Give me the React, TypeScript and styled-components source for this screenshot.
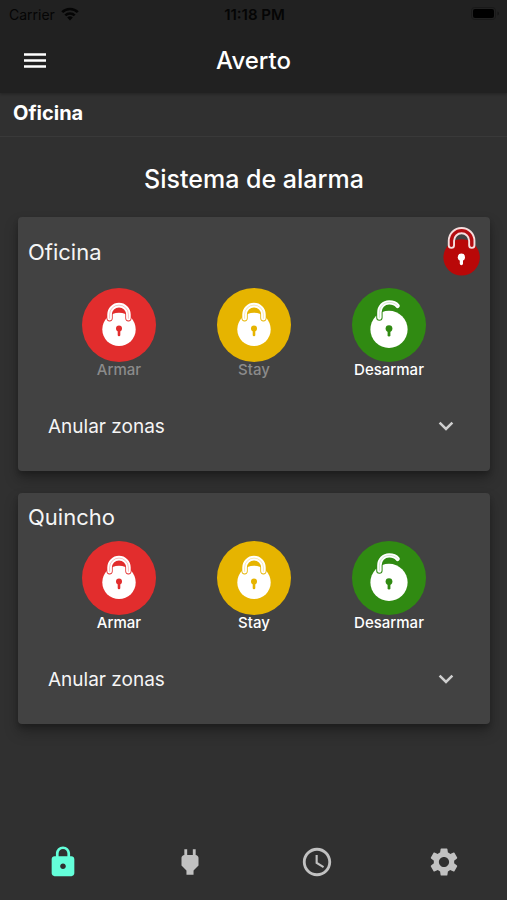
import React, { useState } from "react";
import styled, { createGlobalStyle } from "styled-components";
import { MdLock, MdPower, MdAccessTime, MdSettings } from "react-icons/md";

const GlobalStyle = createGlobalStyle`
  *, *::before, *::after { box-sizing: border-box; }
  body {
    margin: 0;
    background: #303030;
    color: #fff;
    font-family: Inter, Roboto, "Liberation Sans", sans-serif;
  }
  button { font: inherit; color: inherit; background: none; border: 0; padding: 0; cursor: pointer; }
  h1, h2, h3 { margin: 0; font-weight: 500; }
  svg { display: block; }
`;

const Page = styled.div`
  min-height: 100vh;
  display: flex;
  flex-direction: column;
`;

const Header = styled.header`
  background: #212121;
  box-shadow: 0 1px 3px rgba(0, 0, 0, 0.3);
`;

const StatusBar = styled.div`
  display: grid;
  grid-template-columns: 1fr auto 1fr;
  align-items: center;
  height: 28px;
  padding: 0 7px 0 9px;
  color: #050505;
  font-size: 14px;
`;

const Carrier = styled.span`
  display: flex;
  align-items: center;
  gap: 6px;
`;

const Clock = styled.span`
  font-size: 15px;
  font-weight: 600;
`;

const BatterySlot = styled.span`
  justify-self: end;
`;

const AppBar = styled.div`
  display: grid;
  grid-template-columns: 48px 1fr 48px;
  align-items: center;
  height: 65px;
  padding: 0 11px;
`;

const MenuButton = styled.button`
  display: grid;
  place-items: center;
  height: 48px;
`;

const Title = styled.h1`
  font-size: 24px;
  line-height: 32px;
  text-align: center;
`;

const Place = styled.h2`
  padding: 8px 13px 11px;
  border-bottom: 1px solid #393939;
  font-size: 20px;
  line-height: 24px;
  font-weight: 700;
`;

const Main = styled.main`
  flex: 1;
  display: flex;
  flex-direction: column;
  gap: 22px;
  padding: 26px 17px 24px 18px;
`;

const Heading = styled.h2`
  font-size: 25px;
  line-height: 32px;
  text-align: center;
`;

const Card = styled.section`
  padding: 0 10px 20px;
  border-radius: 4px;
  background: #424242;
  box-shadow: 0 8px 14px rgba(0, 0, 0, 0.28), 0 3px 5px rgba(0, 0, 0, 0.2);
`;

const CardHeader = styled.div<{ $tall: boolean }>`
  display: flex;
  align-items: center;
  justify-content: space-between;
  height: ${(p) => (p.$tall ? 70 : 47)}px;
`;

const CardTitle = styled.h3`
  font-size: 22px;
  line-height: 28px;
  font-weight: 400;
  color: #f5f5f5;
`;

const Actions = styled.div`
  display: grid;
  grid-template-columns: repeat(3, 135px);
  justify-content: center;
  padding-top: 1px;
`;

const Action = styled.button<{ $dim: boolean }>`
  display: flex;
  flex-direction: column;
  align-items: center;
  font-size: 15px;
  line-height: 16px;
  font-weight: 500;
  color: ${(p) => (p.$dim ? "#8b8b8b" : "#fff")};
`;

const Disc = styled.span<{ $color: string }>`
  width: 74px;
  height: 74px;
  border-radius: 50%;
  background: ${(p) => p.$color};
`;

const Zones = styled.button`
  display: flex;
  align-items: center;
  justify-content: space-between;
  width: 100%;
  height: 50px;
  margin-top: 23px;
  padding: 0 26px 0 20px;
  font-size: 19px;
  color: #f5f5f5;
`;

const Nav = styled.nav`
  display: grid;
  grid-template-columns: repeat(4, 1fr);
  height: 76px;
`;

const NavItem = styled.button<{ $active: boolean }>`
  display: grid;
  place-items: center;
  font-size: 34px;
  color: ${(p) => (p.$active ? "#64ffda" : "#c1c1c1")};
`;

const Wifi = () => (
  <svg width="18" height="14" viewBox="0 0 18 14" fill="none" stroke="currentColor" strokeWidth="2.6" aria-hidden="true">
    <path d="M1.2 5.2a11 11 0 0 1 15.6 0M4.3 8.4a6.7 6.7 0 0 1 9.4 0" />
    <path d="M9 13.4 6.2 10.6a4 4 0 0 1 5.6 0Z" fill="currentColor" stroke="none" />
  </svg>
);

const Battery = () => (
  <svg width="30" height="14" viewBox="0 0 30 14" aria-hidden="true">
    <rect x="1.5" y="0.5" width="24" height="12" rx="3" fill="none" stroke="#191919" />
    <rect x="3" y="2" width="21" height="9" rx="2" fill="#000" />
    <path d="M27.5 4.5v4q1.5-.6 1.5-2t-1.5-2Z" fill="#151515" />
  </svg>
);

const MenuIcon = () => (
  <svg width="24" height="18" viewBox="0 0 24 18" aria-hidden="true">
    <path d="M1 2.5h22M1 8.5h22M1 14.5h22" stroke="#fff" strokeWidth="2.6" />
  </svg>
);

const Chevron = () => (
  <svg width="16" height="10" viewBox="0 0 16 10" fill="none" aria-hidden="true">
    <path d="m1.6 1.6 6.4 6.4 6.4-6.4" stroke="#cfcfcf" strokeWidth="2.5" />
  </svg>
);

const ClosedLock = ({ color }: { color: string }) => (
  <svg width="74" height="74" viewBox="0 0 74 74" fill="none" strokeLinecap="round" aria-hidden="true">
    <circle cx="37" cy="41.4" r="16.7" fill="#fff" />
    <path d="M27.6 30.3v-3.8a9.4 9.4 0 0 1 18.8 0v3.8" stroke={color} strokeWidth="6.2" />
    <path d="M27.6 30.3v-3.8a9.4 9.4 0 0 1 18.8 0v3.8" stroke="#fff" strokeWidth="4.6" />
    <path d="M27.6 30.3v-3.8a9.4 9.4 0 0 1 18.8 0v3.8" stroke={color} strokeWidth="1" opacity="0.3" />
    <circle cx="37" cy="40.6" r="3" fill={color} />
    <path d="M37 41v6" stroke={color} strokeWidth="2.6" />
  </svg>
);

const OpenLock = ({ color }: { color: string }) => (
  <svg width="74" height="74" viewBox="0 0 74 74" fill="none" strokeLinecap="round" aria-hidden="true">
    <circle cx="37" cy="41.4" r="18.6" fill="#fff" />
    <path d="M27.4 29.5v-5c0-5.6 4.2-10.1 9.8-10.1 3.5 0 6.4 1 8.4 3.4" stroke={color} strokeWidth="6.4" />
    <path d="M27.4 29.5v-5c0-5.6 4.2-10.1 9.8-10.1 3.5 0 6.4 1 8.4 3.4" stroke="#fff" strokeWidth="4.4" />
    <path d="M27.4 29.5v-5c0-5.6 4.2-10.1 9.8-10.1 3.5 0 6.4 1 8.4 3.4" stroke={color} strokeWidth="1" opacity="0.2" />
    <circle cx="37" cy="40.6" r="3.4" fill={color} />
    <path d="M37 41v6.2" stroke={color} strokeWidth="2.8" />
  </svg>
);

const ArmedBadge = () => (
  <svg width="38" height="50" viewBox="0 0 38 50" fill="none" strokeLinecap="round" role="img" aria-label="Armada">
    <circle cx="19.6" cy="30.4" r="18.2" fill="#b90808" />
    <path d="M9.4 18.2v-4.4a10.2 10.2 0 0 1 20.4 0v4.4" stroke="#f6dede" strokeWidth="7.2" />
    <path d="M9.4 18.2v-4.4a10.2 10.2 0 0 1 20.4 0v4.4" stroke="#b40c10" strokeWidth="3.4" />
    <circle cx="19.4" cy="30.2" r="3.6" fill="#fff" />
    <path d="M19.4 31v5.6" stroke="#fff" strokeWidth="3.2" />
  </svg>
);

const actions = [
  { label: "Armar", color: "#e22d2d", Icon: ClosedLock },
  { label: "Stay", color: "#e6b400", Icon: ClosedLock },
  { label: "Desarmar", color: "#308a12", Icon: OpenLock },
];

const AlarmCard = ({ name, armed = false }: { name: string; armed?: boolean }) => {
  const [open, setOpen] = useState(false);
  return (
    <Card>
      <CardHeader $tall={armed}>
        <CardTitle>{name}</CardTitle>
        {armed && <ArmedBadge />}
      </CardHeader>
      <Actions>
        {actions.map(({ label, color, Icon }) => {
          const dim = armed && label !== "Desarmar";
          return (
            <Action key={label} type="button" $dim={dim} disabled={dim}>
              <Disc $color={color}>
                <Icon color={color} />
              </Disc>
              {label}
            </Action>
          );
        })}
      </Actions>
      <Zones type="button" aria-expanded={open} onClick={() => setOpen(!open)}>
        Anular zonas
        <Chevron />
      </Zones>
    </Card>
  );
};

const sections = [
  { label: "Alarma", Icon: MdLock },
  { label: "Enchufes", Icon: MdPower },
  { label: "Horarios", Icon: MdAccessTime },
  { label: "Ajustes", Icon: MdSettings },
];

export default function App() {
  const [section, setSection] = useState("Alarma");
  return (
    <Page>
      <GlobalStyle />
      <Header>
        <StatusBar>
          <Carrier>
            Carrier
            <Wifi />
          </Carrier>
          <Clock>11:18 PM</Clock>
          <BatterySlot>
            <Battery />
          </BatterySlot>
        </StatusBar>
        <AppBar>
          <MenuButton type="button" aria-label="Menú">
            <MenuIcon />
          </MenuButton>
          <Title>Averto</Title>
        </AppBar>
      </Header>
      <Place>Oficina</Place>
      <Main>
        <Heading>Sistema de alarma</Heading>
        <AlarmCard name="Oficina" armed />
        <AlarmCard name="Quincho" />
      </Main>
      <Nav>
        {sections.map(({ label, Icon }) => (
          <NavItem
            key={label}
            type="button"
            aria-label={label}
            $active={label === section}
            onClick={() => setSection(label)}
          >
            <Icon />
          </NavItem>
        ))}
      </Nav>
    </Page>
  );
}
